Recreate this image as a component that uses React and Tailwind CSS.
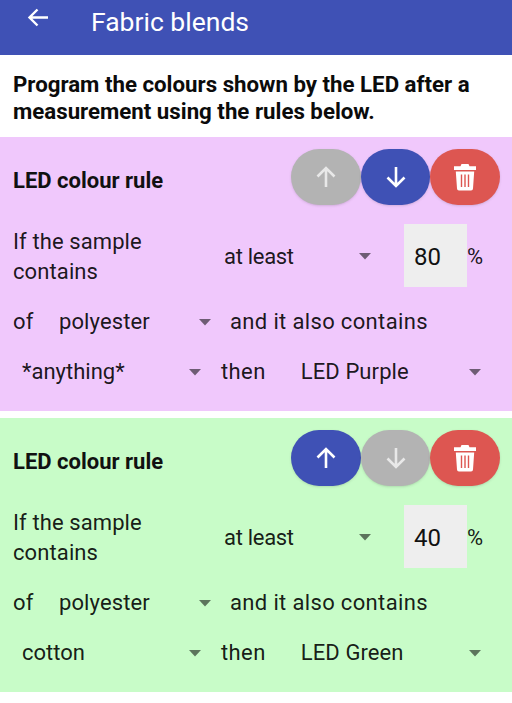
import React from 'react';

function Caret() {
  return (
    <svg width="14" height="8" viewBox="0 0 14 8">
      <path d="M1 1h12L7 7.5z" fill="#000" fillOpacity="0.54" />
    </svg>
  );
}

function Dropdown({ label, width, left = 0, labelClass = '' }) {
  return (
    <div className="flex shrink-0 items-center justify-between" style={{ width, paddingLeft: left }}>
      <span className={labelClass}>{label}</span>
      <Caret />
    </div>
  );
}

function ArrowIcon({ down = false }) {
  return (
    <svg width="24" height="24" viewBox="0 0 24 24" className={down ? 'rotate-180' : ''}>
      <path d="M12 3v19M3.500 11.500L12 3l8.500 8.500" fill="none" stroke="currentColor" strokeWidth="2.600" />
    </svg>
  );
}

function TrashIcon() {
  return (
    <svg width="24" height="28" viewBox="0 0 24 28">
      <path
        d="M8.500 1h7l1 2.200H23v3.800H1V3.200h6.500zM2.800 8.500h18.400l-1.200 17a2 2 0 0 1-2 2H6a2 2 0 0 1-2-2z"
        fill="#fff"
      />
      <path d="M8.500 11.500v12.500M12 11.500v12.500M15.500 11.500v12.500" stroke="#dd5651" strokeWidth="1.400" />
    </svg>
  );
}

function RoundButton({ color, iconColor = 'text-white', children }) {
  return (
    <button className={`flex h-14 w-[69.670px] items-center justify-center rounded-full shadow-sm ${color} ${iconColor}`}>
      {children}
    </button>
  );
}

function RuleCard({ bg, percent, material, led, upEnabled, downEnabled, textBottom }) {
  return (
    <section className={`${bg} pt-3 pb-[24px] pl-[13px] text-[22px] leading-[30px] tracking-[0.1px] text-black/90`}>
      <div className="flex items-center justify-between pr-3">
        <h3 className="mt-2 font-bold tracking-normal text-[#111]">LED colour rule</h3>
        <div className="flex">
          <RoundButton color={upEnabled ? 'bg-[#3f51b5]' : 'bg-[#b3b3b3]'} iconColor={upEnabled ? 'text-white' : 'text-white/70'}>
            <ArrowIcon />
          </RoundButton>
          <RoundButton color={downEnabled ? 'bg-[#3f51b5]' : 'bg-[#b3b3b3]'} iconColor={downEnabled ? 'text-white' : 'text-white/70'}>
            <ArrowIcon down />
          </RoundButton>
          <RoundButton color="bg-[#dd5651]">
            <TrashIcon />
          </RoundButton>
        </div>
      </div>

      <div className="mt-[19px] flex h-[63px] items-center">
        <p className="w-[211px] shrink-0 pt-[2px]">If the sample<br />contains</p>
        <Dropdown label="at least" width={148} labelClass="pt-[3px] tracking-[-0.300px]" />
        <div className="ml-[32px] flex h-[63px] w-[63px] items-center bg-[#eeeeee] pt-[2px] pl-[10px] text-[24px] tracking-normal text-[#111]">{percent}</div>
        <span className="pt-[3px]">%</span>
      </div>

      <div className="mt-[20px] flex h-[30px] items-center">
        <span className="w-[46px] shrink-0">of</span>
        <Dropdown label={material} width={153} />
        <span className="ml-[18px] tracking-[0.350px]">and it also contains</span>
      </div>

      <div className="mt-[20px] flex h-[30px] items-center">
        <Dropdown label={textBottom} width={189} left={9} labelClass="tracking-normal" />
        <span className="ml-[19px] tracking-[0.400px]">then</span>
        <div className="ml-[35px]">
          <Dropdown label={led} width={181} />
        </div>
      </div>
    </section>
  );
}

export default function App() {
  return (
    <div className="h-[703px] w-[512px] overflow-hidden bg-white font-['Roboto',sans-serif]">
      <header className="flex h-[55px] items-center bg-[#3f51b5] pl-[27px] text-white">
        <svg width="22" height="20" viewBox="0 0 22 20" className="mb-[20px]">
          <path d="M21 9.500H3M10.500 1.500l-8 8 8 8" fill="none" stroke="#fff" strokeWidth="2.400" />
        </svg>
        <h1 className="mb-[11px] ml-[42px] text-[26.500px] leading-none">Fabric blends</h1>
      </header>

      <p className="px-[13px] pt-[16px] pb-[12px] text-[22.250px] leading-[27px] font-bold text-[#0b0b0b]">
        Program the colours shown by the LED after a measurement using the rules below.
      </p>

      <RuleCard bg="bg-[#f0c8fc]" percent="80" material="polyester" textBottom="*anything*" led="LED Purple" downEnabled />
      <div className="h-[7px]" />
      <RuleCard bg="bg-[#c8fcc8]" percent="40" material="polyester" textBottom="cotton" led="LED Green" upEnabled />
    </div>
  );
}
